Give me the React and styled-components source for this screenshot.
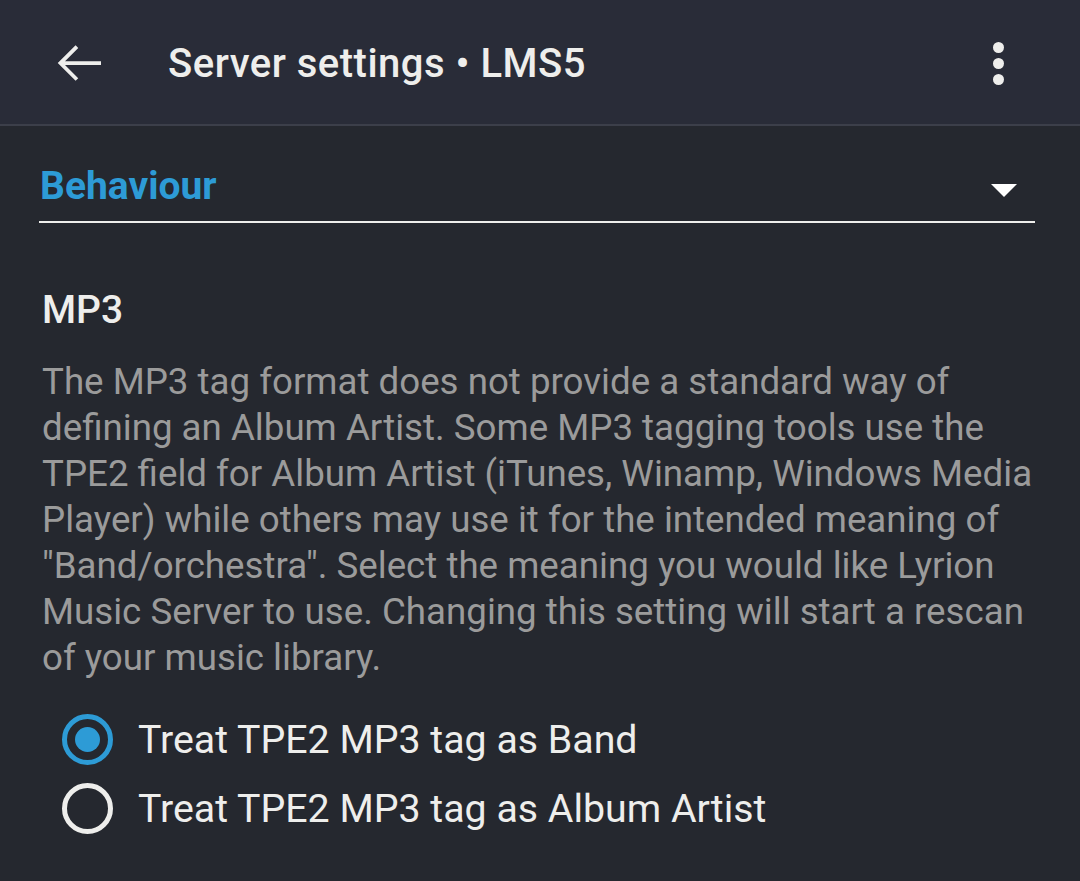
import React, { useState } from "react";
import styled, { createGlobalStyle } from "styled-components";

const blue = "#2d9bd6";
const text = "#eeeeec";

const Global = createGlobalStyle`
  html, body {
    margin: 0;
    padding: 0;
    background: #25282f;
    font-family: Roboto, "Noto Sans", sans-serif;
  }
`;

const options = [
  { id: "band", label: "Treat TPE2 MP3 tag as Band" },
  { id: "artist", label: "Treat TPE2 MP3 tag as Album Artist" },
];

const App = () => {
  const [value, setValue] = useState("band");
  return (
    <S.page>
      <Global />
      <S.toolbar>
        <S.iconBtn aria-label="back">
          <svg width="60" height="60" viewBox="0 0 24 24">
            <path
              d="M20 11.25H5.6l5.3-5.3-1.06-1.06L2.7 12l7.14 7.11 1.06-1.06-5.3-5.3H20z"
              fill={text}
            />
          </svg>
        </S.iconBtn>
        <S.title>Server settings • LMS5</S.title>
        <S.menuBtn aria-label="menu">
          <S.dot />
          <S.dot />
          <S.dot />
        </S.menuBtn>
      </S.toolbar>
      <S.content>
        <S.select>
          <S.selectText>Behaviour</S.selectText>
          <S.caret />
        </S.select>
        <S.heading>MP3</S.heading>
        <S.desc>
          The MP3 tag format does not provide a standard way of defining an
          Album Artist. Some MP3 tagging tools use the TPE2 field for Album
          Artist (iTunes, Winamp, Windows Media Player) while others may use it
          for the intended meaning of "Band/orchestra". Select the meaning you
          would like Lyrion Music Server to use. Changing this setting will
          start a rescan of your music library.
        </S.desc>
        <S.radios>
          {options.map((o) => (
            <S.option key={o.id} onClick={() => setValue(o.id)}>
              <S.radio $checked={value === o.id} />
              <S.label>{o.label}</S.label>
            </S.option>
          ))}
        </S.radios>
      </S.content>
    </S.page>
  );
};

const S = {
  page: styled.div`
    min-height: 881px;
    background: #25282f;
  `,
  toolbar: styled.div`
    height: 126px;
    display: flex;
    align-items: center;
    background: #292c38;
    border-bottom: 2px solid #3c3f4a;
    box-sizing: border-box;
    padding: 2px 58px 0 51px;
  `,
  iconBtn: styled.div`
    width: 60px;
    height: 60px;
    display: flex;
    align-items: center;
    justify-content: center;
    margin-right: 57px;
  `,
  title: styled.div`
    flex: 1;
    color: ${text};
    font-size: 40px;
    font-weight: 500;
    letter-spacing: 0.5px;
  `,
  menuBtn: styled.div`
    display: flex;
    flex-direction: column;
    align-items: center;
    gap: 5px;
    width: 48px;
  `,
  dot: styled.span`
    width: 11px;
    height: 11px;
    border-radius: 50%;
    background: ${text};
  `,
  content: styled.div`
    padding: 0 45px 0 39px;
  `,
  select: styled.div`
    display: flex;
    align-items: flex-end;
    justify-content: space-between;
    height: 97px;
    border-bottom: 2px solid ${text};
    box-sizing: border-box;
  `,
  selectText: styled.span`
    color: ${blue};
    font-size: 39px;
    font-weight: 700;
    line-height: 46px;
    padding: 0 0 12px 1px;
  `,
  caret: styled.span`
    width: 0;
    height: 0;
    border-left: 13px solid transparent;
    border-right: 13px solid transparent;
    border-top: 13px solid #ffffff;
    margin: 0 18px 24px 0;
  `,
  heading: styled.div`
    margin: 64px 0 0 3px;
    color: ${text};
    font-size: 39px;
    font-weight: 500;
    line-height: 46px;
  `,
  desc: styled.div`
    margin: 26px -4px 0 3px;
    color: #9b9b9b;
    font-size: 36.7px;
    line-height: 46px;
  `,
  radios: styled.div`
    margin-top: 33px;
    padding-left: 23px;
    display: flex;
    flex-direction: column;
    gap: 18px;
  `,
  option: styled.div`
    display: flex;
    align-items: center;
    cursor: pointer;
  `,
  radio: styled.span`
    width: 51px;
    height: 51px;
    box-sizing: border-box;
    border-radius: 50%;
    border: 5px solid ${(p) => (p.$checked ? blue : text)};
    display: flex;
    align-items: center;
    justify-content: center;
    margin-right: 25px;
    &::after {
      content: "";
      width: 25px;
      height: 25px;
      border-radius: 50%;
      background: ${(p) => (p.$checked ? blue : "transparent")};
    }
  `,
  label: styled.span`
    color: ${text};
    font-size: 39.3px;
    line-height: 50px;
  `,
};

export default App;
